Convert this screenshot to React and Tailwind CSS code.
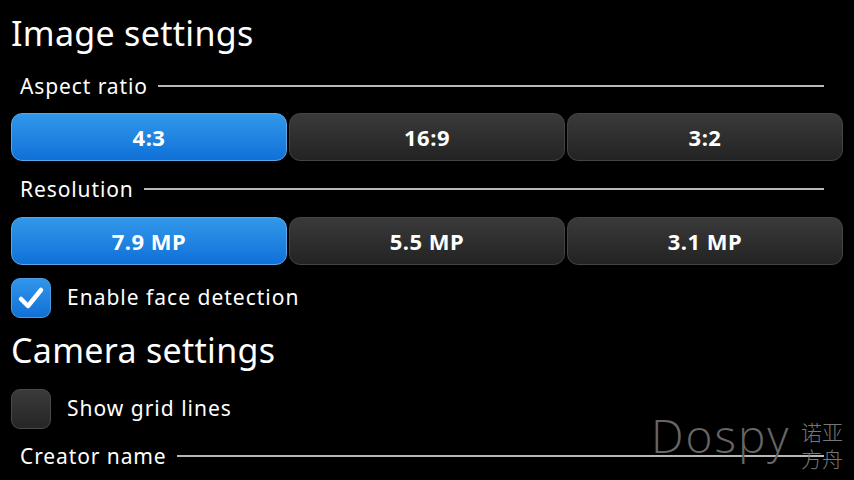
export default function App() {
  const font = { fontFamily: '"Noto Sans", "Open Sans", sans-serif' };
  const Btn = ({ label, active }) => (
    <div
      className={
        "flex-1 h-[48px] rounded-[11px] flex items-center justify-center text-white font-bold text-[22px] tracking-[0.5px] border " +
        (active
          ? "bg-gradient-to-b from-[#3298ea] to-[#0f70d8] border-[#5aa6e6]"
          : "bg-gradient-to-b from-[#3a3a3a] to-[#232323] border-[#444]")
      }
    >
      {label}
    </div>
  );
  const Label = ({ text }) => (
    <div className="flex items-center pl-[20px] pr-[30px] h-[24px]">
      <span className="text-white text-[21px] tracking-[0.9px] leading-none">{text}</span>
      <div className="flex-1 ml-[10px] h-[2px] bg-[#b8b8b8]" />
    </div>
  );
  return (
    <div className="w-[854px] h-[480px] bg-black overflow-hidden relative" style={font}>
      <div className="flex flex-col pl-[11px] pr-[11px]">
        <div className="text-white text-[34px] tracking-[0.3px] leading-none mt-[16px] h-[40px]">Image settings</div>
        <div className="-mx-[11px] mt-[18px]"><Label text="Aspect ratio" /></div>
        <div className="flex gap-[2px] mt-[15px]">
          <Btn label="4:3" active />
          <Btn label="16:9" />
          <Btn label="3:2" />
        </div>
        <div className="-mx-[11px] mt-[16px]"><Label text="Resolution" /></div>
        <div className="flex gap-[2px] mt-[16px]">
          <Btn label="7.9 MP" active />
          <Btn label="5.5 MP" />
          <Btn label="3.1 MP" />
        </div>
        <div className="flex items-center mt-[13px] h-[40px]">
          <div className="w-[40px] h-[40px] rounded-[9px] bg-gradient-to-b from-[#3196ea] to-[#1170d6] border border-[#4a9de2] flex items-center justify-center">
            <svg width="28" height="26" viewBox="0 0 28 26">
              <path d="M4 14 L11 21 L24 5" fill="none" stroke="white" strokeWidth="4.5" strokeLinecap="round" strokeLinejoin="round" />
            </svg>
          </div>
          <span className="text-white text-[21px] tracking-[1px] ml-[16px]">Enable face detection</span>
        </div>
        <div className="text-white text-[34px] tracking-[0.3px] leading-none mt-[15px] h-[40px]">Camera settings</div>
        <div className="flex items-center mt-[16px] h-[40px]">
          <div className="w-[40px] h-[40px] rounded-[9px] bg-gradient-to-b from-[#3a3a3a] to-[#262626] border border-[#4a4a4a]" />
          <span className="text-white text-[21px] tracking-[1px] ml-[16px]">Show grid lines</span>
        </div>
        <div className="-mx-[11px] mt-[15px]"><Label text="Creator name" /></div>
      </div>
      <div className="absolute left-[651px] top-[412px] pointer-events-none">
        <span className="text-[#666] text-[46px] tracking-[2px] leading-none" style={{ fontFamily: '"Open Sans", sans-serif', fontWeight: 300 }}>Dospy</span>
      </div>
      <div className="absolute left-[801px] top-[418px] flex flex-col text-[#777] text-[21px] leading-[27px] pointer-events-none" style={{ fontFamily: '"Noto Sans CJK SC", sans-serif', fontWeight: 300 }}>
        <span>诺亚</span>
        <span>方舟</span>
      </div>
    </div>
  );
}
